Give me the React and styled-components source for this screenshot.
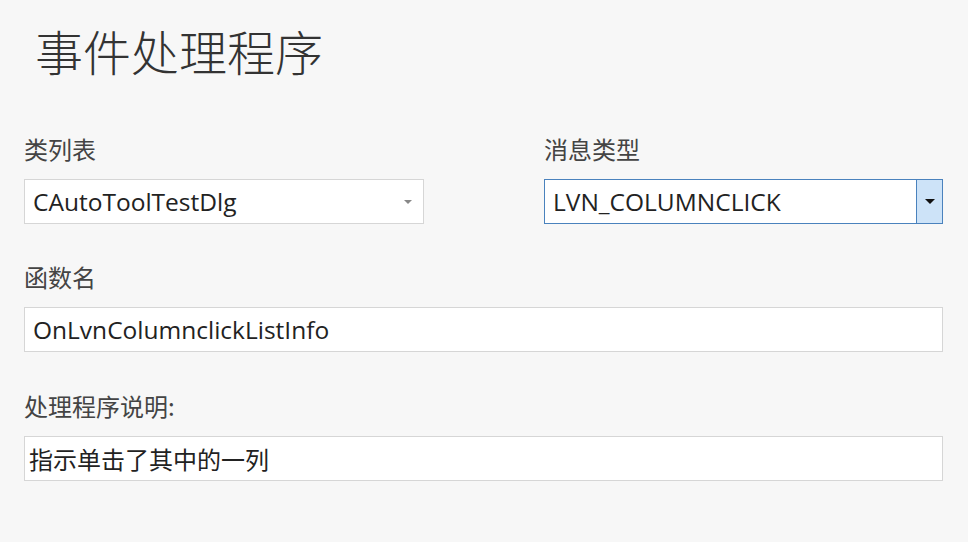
import React from 'react';
import styled, { createGlobalStyle } from 'styled-components';

const Global = createGlobalStyle`
  html, body { margin: 0; padding: 0; background: #f7f7f7; }
  body { font-family: "Open Sans", "Noto Sans CJK SC", sans-serif; color: #222; }
`;

const Page = styled.div`
  width: 968px; height: 542px; box-sizing: border-box;
  padding: 22px 25px 0 24px;
  display: flex; flex-direction: column;
`;

const Title = styled.h1`
  margin: 0 0 0 11px;
  font-family: "Noto Sans CJK SC", sans-serif;
  font-weight: 300; font-size: 48px; line-height: 56px;
  color: #333;
`;

const Row = styled.div`
  display: grid; grid-template-columns: 400px 399px; column-gap: 120px;
  margin-top: ${p => p.top || 0}px;
`;

const Field = styled.div`
  display: flex; flex-direction: column;
  margin-top: ${p => p.top || 0}px;
`;

const Label = styled.label`
  font-family: "Noto Sans CJK SC", sans-serif;
  font-size: 24px; line-height: 26px; color: #444;
  height: 26px; margin-bottom: 17px;
`;

const Box = styled.div`
  box-sizing: border-box; height: 45px;
  display: flex; align-items: center;
  background: #fff;
  border: 1px solid ${p => (p.focus ? '#4a82bd' : '#d6d6d6')};
  font-size: 24.5px; color: #222;
  padding-left: ${p => p.pad || 8}px;
  overflow: hidden; white-space: nowrap;
`;

const Value = styled.span`
  flex: 1;
  font-family: "Open Sans", "Noto Sans CJK SC", sans-serif;
  font-size: ${p => (p.cjk ? 24 : 24.5)}px;
`;

const Arrow = styled.span`
  width: 0; height: 0; margin-right: 11px;
  border-left: 4px solid transparent; border-right: 4px solid transparent;
  border-top: 4px solid #888;
`;

const DropButton = styled.span`
  align-self: stretch; width: 25px;
  display: flex; align-items: center; justify-content: center;
  background: #cde3f8; border-left: 1px solid #4a82bd;
`;

const DarkArrow = styled.span`
  width: 0; height: 0;
  border-left: 5px solid transparent; border-right: 5px solid transparent;
  border-top: 5px solid #111;
`;

export default function App() {
  return (
    <Page>
      <Global />
      <Title>事件处理程序</Title>
      <Row top={58}>
        <Field>
          <Label>类列表</Label>
          <Box>
            <Value>CAutoToolTestDlg</Value>
            <Arrow />
          </Box>
        </Field>
        <Field>
          <Label>消息类型</Label>
          <Box focus>
            <Value>LVN_COLUMNCLICK</Value>
            <DropButton><DarkArrow /></DropButton>
          </Box>
        </Field>
      </Row>
      <Field top={40}>
        <Label>函数名</Label>
        <Box>
          <Value>OnLvnColumnclickListInfo</Value>
        </Box>
      </Field>
      <Field top={41}>
        <Label>处理程序说明:</Label>
        <Box pad={4}>
          <Value cjk>指示单击了其中的一列</Value>
        </Box>
      </Field>
    </Page>
  );
}
